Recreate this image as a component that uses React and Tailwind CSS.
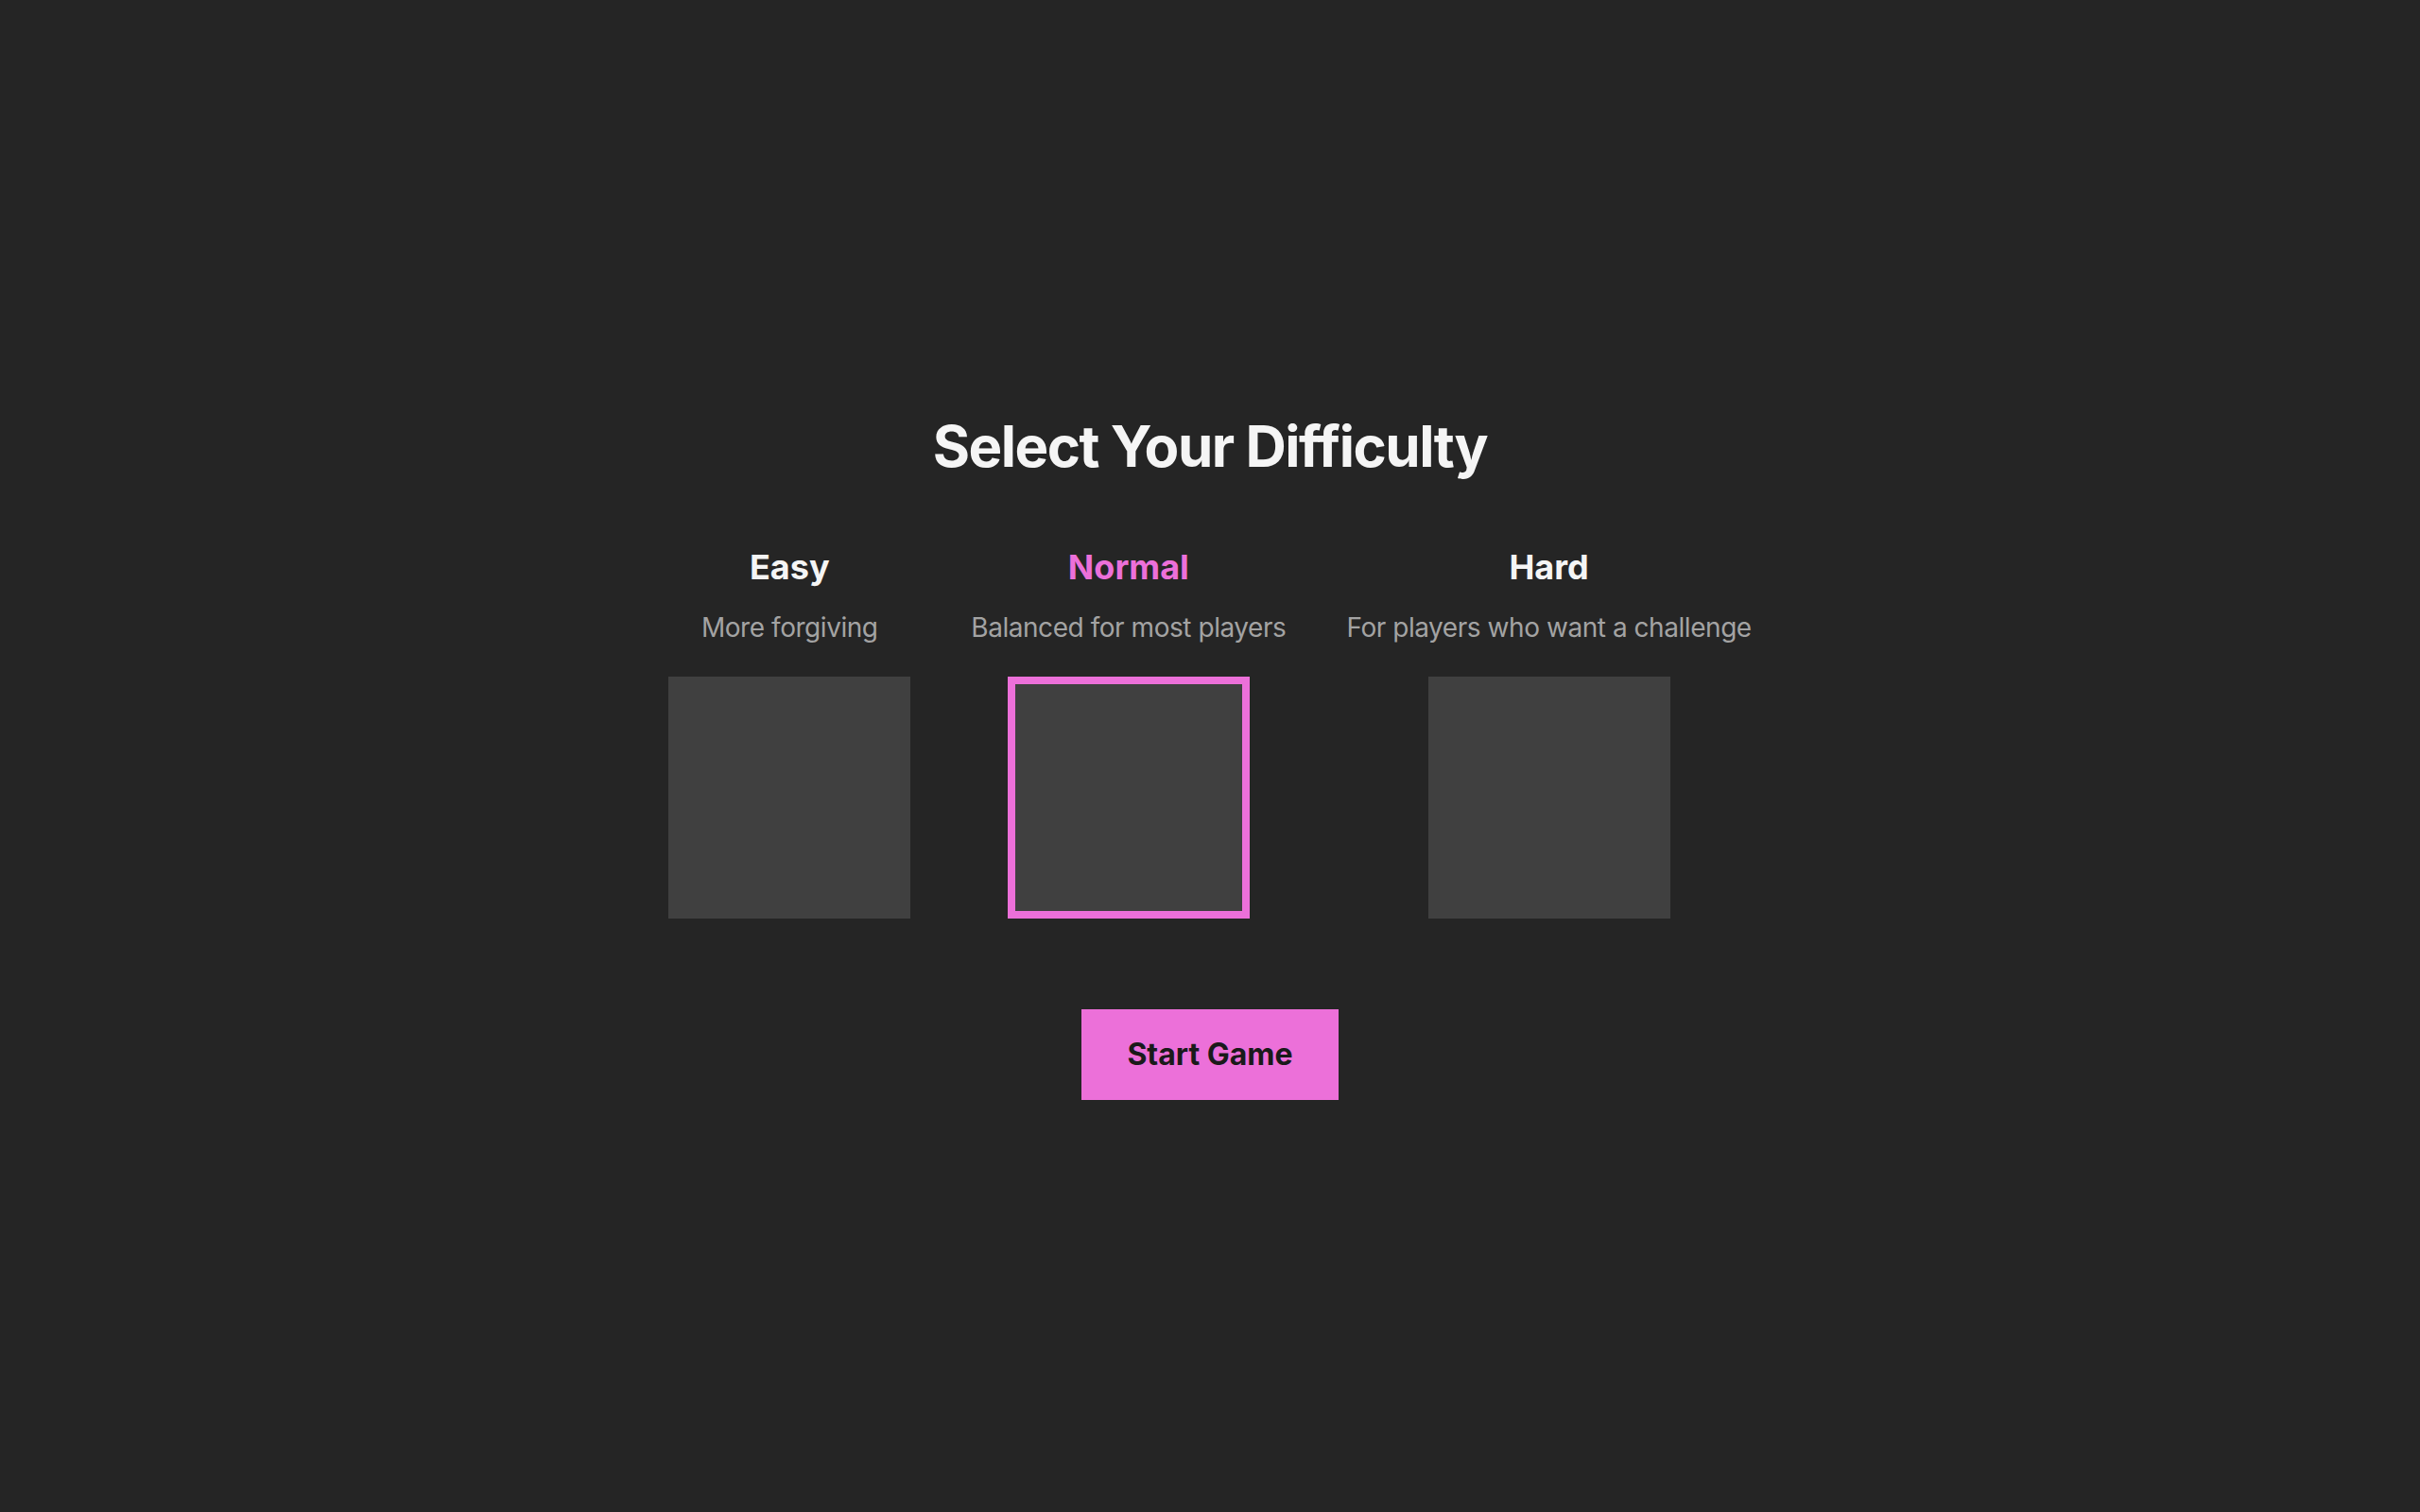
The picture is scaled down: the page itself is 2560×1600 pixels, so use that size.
import React from "react";

const levels = [
  { name: "Easy", desc: "More forgiving", selected: false },
  { name: "Normal", desc: "Balanced for most players", selected: true },
  { name: "Hard", desc: "For players who want a challenge", selected: false },
];

export default function App() {
  return (
    <div
      className="min-h-screen w-full bg-[#252525] flex flex-col items-center justify-center"
      style={{ fontFamily: "Inter, 'Noto Sans', sans-serif" }}
    >
      <h1 className="text-[60px] leading-[72px] font-bold text-[#f5f5f5] tracking-[-1.5px] mb-16">
        Select Your Difficulty
      </h1>
      <div className="flex flex-row gap-16">
        {levels.map((l) => (
          <div key={l.name} className="flex flex-col items-center">
            <div
              className={
                l.selected
                  ? "text-[36px] leading-[56px] font-bold text-[#ec70d9]"
                  : "text-[36px] leading-[56px] font-bold text-[#f5f5f5]"
              }
            >
              {l.name}
            </div>
            <div className="text-[28px] leading-[40px] tracking-[-0.45px] text-[#a3a3a3] mt-4 mb-8 whitespace-nowrap">
              {l.desc}
            </div>
            <div
              className={
                l.selected
                  ? "w-64 h-64 bg-[#404040] border-8 border-[#ec70d9]"
                  : "w-64 h-64 bg-[#404040]"
              }
            />
          </div>
        ))}
      </div>
      <button className="mt-24 px-12 py-6 bg-[#ec70d9] text-[#1a1a1a] text-[32px] leading-[48px] font-bold">
        Start Game
      </button>
    </div>
  );
}
